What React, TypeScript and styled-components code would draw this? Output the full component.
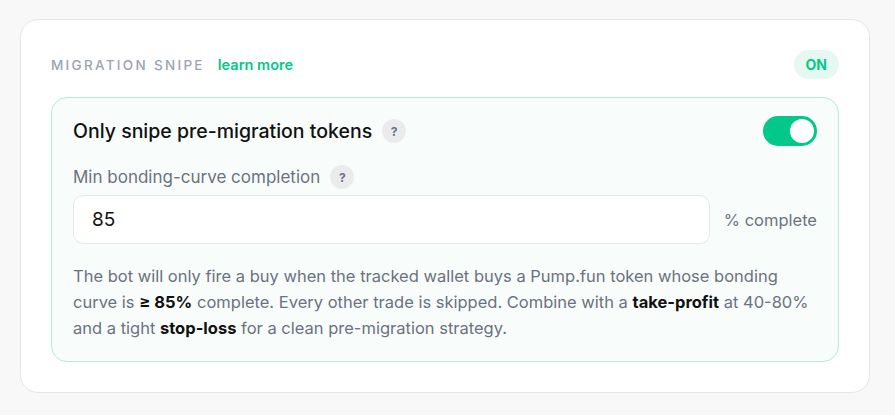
import React from "react";
import styled, { createGlobalStyle } from "styled-components";

const Global = createGlobalStyle`
  html, body { margin: 0; padding: 0; background: #f8f8f8; }
  body { font-family: Inter, "Noto Sans", sans-serif; -webkit-font-smoothing: antialiased; }
  * { box-sizing: border-box; }
`;

const Page = styled.div`
  padding: 19px 20px;
`;

const Card = styled.section`
  width: 850px;
  background: #ffffff;
  border: 1px solid #e6e6e6;
  border-radius: 18px;
  padding: 30px;
  display: flex;
  flex-direction: column;
  gap: 18px;
`;

const Header = styled.div`
  display: flex;
  align-items: center;
  height: 29px;
`;

const Eyebrow = styled.span`
  font-size: 13.5px;
  font-weight: 500;
  letter-spacing: 2.3px;
  color: #9ca3af;
  text-transform: uppercase;
`;

const LearnMore = styled.a`
  margin-left: 13px;
  font-size: 14.5px;
  font-weight: 600;
  color: #02c98a;
  text-decoration: none;
`;

const StatusBadge = styled.span`
  margin-left: auto;
  height: 29px;
  padding: 0 12px;
  border-radius: 999px;
  background: #e5f8f1;
  color: #02c98a;
  font-size: 14px;
  font-weight: 700;
  display: flex;
  align-items: center;
`;

const Panel = styled.div`
  border: 1px solid #b2ecd6;
  background: #f8fdfb;
  border-radius: 16px;
  padding: 18px 21px 20px;
  display: flex;
  flex-direction: column;
`;

const Row = styled.div`
  display: flex;
  align-items: center;
`;

const Title = styled.span`
  font-size: 19.5px;
  font-weight: 500;
  color: #111111;
`;

const Help = styled.span<{ $size: number }>`
  width: ${(p) => p.$size}px;
  height: ${(p) => p.$size}px;
  margin-left: 10px;
  border-radius: 50%;
  background: #ebebee;
  color: #6b7280;
  font-size: 12px;
  font-weight: 700;
  display: inline-flex;
  align-items: center;
  justify-content: center;
`;

const Toggle = styled.button`
  margin-left: auto;
  width: 54px;
  height: 30px;
  border: none;
  border-radius: 999px;
  background: #02c88a;
  padding: 3px;
  display: flex;
  justify-content: flex-end;
  cursor: pointer;
`;

const Knob = styled.span`
  width: 24px;
  height: 24px;
  border-radius: 50%;
  background: #ffffff;
`;

const LabelRow = styled(Row)`
  margin-top: 19px;
  height: 24px;
`;

const Label = styled.span`
  font-size: 17px;
  font-weight: 400;
  color: #6b7280;
`;

const InputRow = styled(Row)`
  margin-top: 6px;
  gap: 14px;
`;

const Input = styled.input`
  flex: 1;
  min-width: 0;
  height: 49px;
  border: 1px solid #e5e7eb;
  border-radius: 10px;
  background: #ffffff;
  padding: 0 18px;
  font-family: inherit;
  font-size: 19px;
  color: #111111;
  outline: none;
`;

const Suffix = styled.span`
  flex-shrink: 0;
  white-space: nowrap;
  font-size: 16.5px;
  color: #6b7280;
`;

const Description = styled.p`
  margin: 19px 0 0;
  font-size: 16.5px;
  line-height: 26px;
  color: #6b7280;
`;

const Strong = styled.b`
  font-weight: 700;
  color: #111111;
`;

export default function App() {
  return (
    <>
      <Global />
      <Page>
        <Card>
          <Header>
            <Eyebrow>Migration snipe</Eyebrow>
            <LearnMore href="#">learn more</LearnMore>
            <StatusBadge>ON</StatusBadge>
          </Header>
          <Panel>
            <Row>
              <Title>Only snipe pre-migration tokens</Title>
              <Help $size={24}>?</Help>
              <Toggle aria-label="toggle">
                <Knob />
              </Toggle>
            </Row>
            <LabelRow>
              <Label>Min bonding-curve completion</Label>
              <Help $size={24}>?</Help>
            </LabelRow>
            <InputRow>
              <Input defaultValue="85" />
              <Suffix>% complete</Suffix>
            </InputRow>
            <Description>
              The bot will only fire a buy when the tracked wallet buys a Pump.fun token whose bonding curve is{" "}
              <Strong>≥ 85%</Strong> complete. Every other trade is skipped. Combine with a{" "}
              <Strong>take-profit</Strong> at 40-80% and a tight <Strong>stop-loss</Strong> for a clean
              pre-migration strategy.
            </Description>
          </Panel>
        </Card>
      </Page>
    </>
  );
}
